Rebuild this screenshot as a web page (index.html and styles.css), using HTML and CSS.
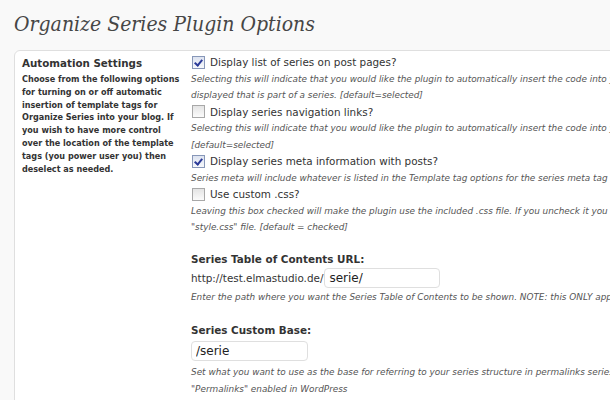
FILE: index.html
```html
<!DOCTYPE html>
<html lang="en">

<head>
    <meta charset="UTF-8">
    <title>Organize Series Plugin Options</title>
    <link rel="stylesheet" href="styles.css">
</head>

<body>
    <div class="wrap">
        <h2>Organize Series Plugin Options</h2>

        <div class="postbox">
            <div class="side">
                <h3>Automation Settings</h3>
                <p>Choose from the following options for turning on or off automatic insertion of template tags for Organize Series into your blog. If you wish to have more control over the location of the template tags (you power user you) then deselect as needed.</p>
            </div>

            <div class="main">
                <div class="option">
                    <label><span class="check checked"></span>Display list of series on post pages?</label>
                    <p class="desc">Selecting this will indicate that you would like the plugin to automatically insert the code into your post content.<br>displayed that is part of a series. [default=selected]</p>
                </div>
                <div class="option">
                    <label><span class="check"></span>Display series navigation links?</label>
                    <p class="desc">Selecting this will indicate that you would like the plugin to automatically insert the code into your posts for navigation.<br>[default=selected]</p>
                </div>
                <div class="option">
                    <label><span class="check checked"></span>Display series meta information with posts?</label>
                    <p class="desc">Series meta will include whatever is listed in the Template tag options for the series meta tag (see below).</p>
                </div>
                <div class="option">
                    <label><span class="check"></span>Use custom .css?</label>
                    <p class="desc">Leaving this box checked will make the plugin use the included .css file. If you uncheck it you will need to add styles to your<br>"style.css" file. [default = checked]</p>
                </div>

                <div class="field">
                    <h4>Series Table of Contents URL:</h4>
                    <div class="input-row">http://test.elmastudio.de/<input type="text" class="text toc" value="serie/"></div>
                    <p class="desc">Enter the path where you want the Series Table of Contents to be shown. NOTE: this ONLY applies if you have permalinks enabled.</p>
                </div>

                <div class="field">
                    <h4>Series Custom Base:</h4>
                    <div class="input-row tall"><input type="text" class="text base" value="/serie"></div>
                    <p class="desc">Set what you want to use as the base for referring to your series structure in permalinks series archives if you have<br>"Permalinks" enabled in WordPress</p>
                </div>
            </div>
        </div>
    </div>
</body>

</html>
```

FILE: styles.css
```css
html, body {
    overflow: hidden;
}

body {
    margin: 0;
    background: #f9f9f9;
    font-family: 'DejaVu Sans', Verdana, sans-serif;
    color: #333;
}

.wrap {
    padding-left: 14px;
    width: 800px;
}

h2 {
    font-family: 'DejaVu Serif Condensed', 'DejaVu Serif', Georgia, serif;
    font-style: italic;
    font-weight: normal;
    font-size: 21px;
    line-height: 30px;
    color: #464646;
    margin: 9px 0 0;
    height: 41px;
}

.postbox {
    display: flex;
    background: #fff;
    border: 1px solid #dfdfdf;
    border-radius: 6px;
    min-height: 400px;
}

.side {
    width: 158px;
    padding: 5px 0 0 7px;
    flex-shrink: 0;
}

.side h3 {
    margin: 0;
    font-size: 10.3px;
    line-height: 14px;
    font-weight: bold;
    color: #333;
}

.side p {
    margin: 3px 0 0;
    font-family: 'DejaVu Sans Condensed', 'DejaVu Sans', sans-serif;
    font-weight: bold;
    font-size: 9px;
    line-height: 12.8px;
    color: #333;
}

.main {
    padding: 3px 0 0 11px;
    white-space: nowrap;
}

.option label {
    display: flex;
    align-items: center;
    font-size: 10.4px;
    line-height: 16.5px;
    color: #333;
}

.check {
    width: 11px;
    height: 11px;
    margin: 0 5px 0 1px;
    border: 1px solid #a8a8a8;
    background: linear-gradient(#e4e4e4, #fbfbfb);
    position: relative;
}

.check.checked {
    border-color: #8797b8;
    background: linear-gradient(#dde3f0, #f6f8fc);
}

.check.checked::after {
    content: "";
    position: absolute;
    left: 3px;
    top: 1px;
    width: 3px;
    height: 6px;
    border: solid #2b3a98;
    border-width: 0 2px 2px 0;
    transform: rotate(40deg);
}

.desc {
    margin: 0;
    font-family: 'DejaVu Sans', sans-serif;
    font-style: italic;
    font-size: 8.9px;
    line-height: 16.5px;
    color: #555;
}

.field {
    margin-top: 15px;
}

.field + .field {
    margin-top: 17px;
}

.field h4 {
    margin: 0;
    font-size: 10.4px;
    line-height: 17px;
    font-weight: bold;
    color: #333;
}

.input-row {
    display: flex;
    align-items: center;
    height: 21px;
    font-size: 10.4px;
}

.input-row.tall {
    height: 23px;
    margin-bottom: 2px;
}

.text {
    box-sizing: border-box;
    height: 20px;
    margin: 0 0 0 1px;
    padding: 0 4px;
    border: 1px solid #dfdfdf;
    border-radius: 4px;
    background: #fff;
    font-family: 'DejaVu Sans', sans-serif;
    font-size: 12px;
    color: #222;
}

.text.toc {
    width: 116px;
}

.text.base {
    width: 117px;
    margin-left: 0;
}
```
